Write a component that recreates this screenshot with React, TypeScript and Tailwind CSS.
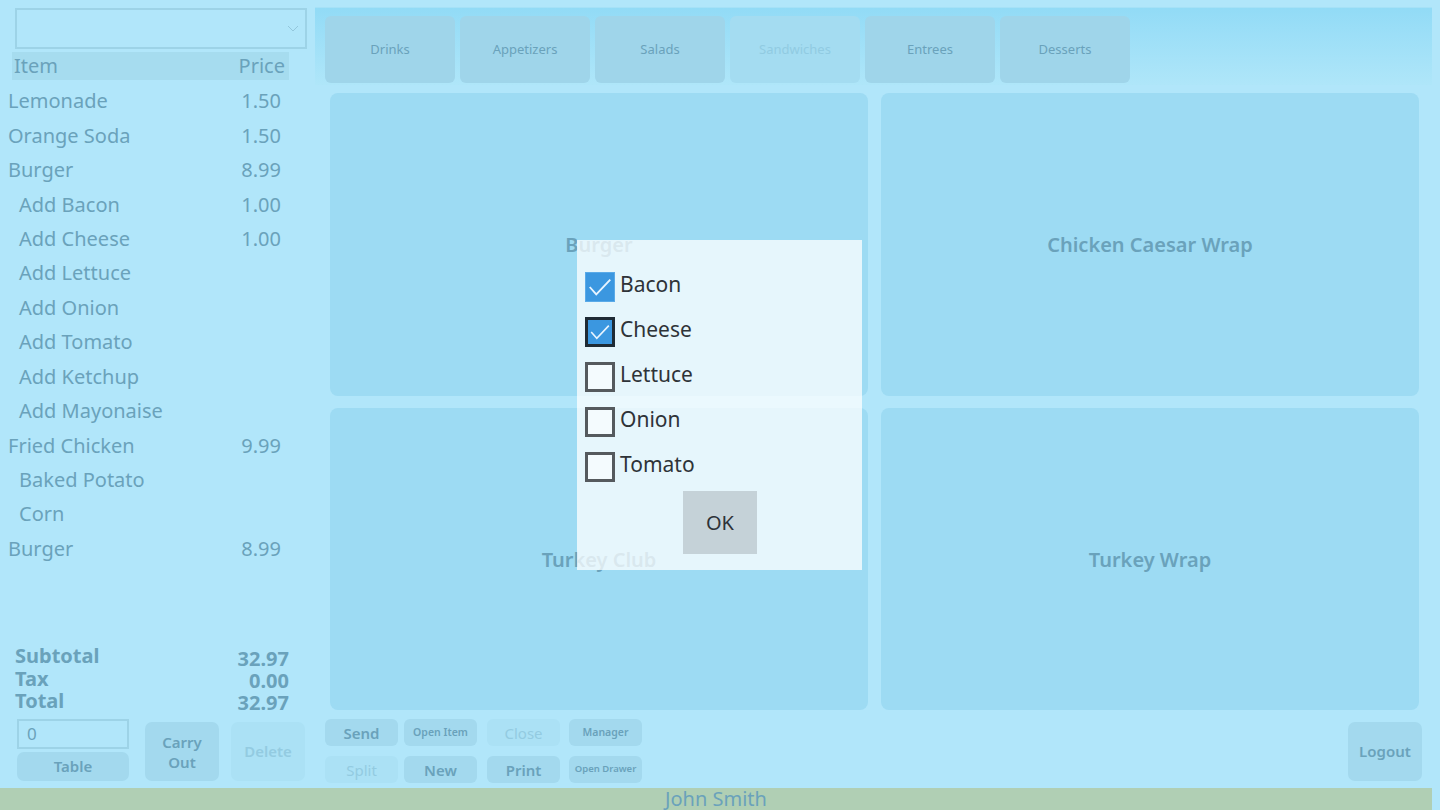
import React from "react";

const items = [
  { name: "Lemonade", price: "1.50", sub: false },
  { name: "Orange Soda", price: "1.50", sub: false },
  { name: "Burger", price: "8.99", sub: false },
  { name: "Add Bacon", price: "1.00", sub: true },
  { name: "Add Cheese", price: "1.00", sub: true },
  { name: "Add Lettuce", price: "", sub: true },
  { name: "Add Onion", price: "", sub: true },
  { name: "Add Tomato", price: "", sub: true },
  { name: "Add Ketchup", price: "", sub: true },
  { name: "Add Mayonaise", price: "", sub: true },
  { name: "Fried Chicken", price: "9.99", sub: false },
  { name: "Baked Potato", price: "", sub: true },
  { name: "Corn", price: "", sub: true },
  { name: "Burger", price: "8.99", sub: false },
];

const categories = [
  { label: "Drinks", disabled: false },
  { label: "Appetizers", disabled: false },
  { label: "Salads", disabled: false },
  { label: "Sandwiches", disabled: true },
  { label: "Entrees", disabled: false },
  { label: "Desserts", disabled: false },
];

const tiles = ["Burger", "Chicken Caesar Wrap", "Turkey Club", "Turkey Wrap"];

const options = [
  { label: "Bacon", checked: true, focused: false },
  { label: "Cheese", checked: true, focused: true },
  { label: "Lettuce", checked: false, focused: false },
  { label: "Onion", checked: false, focused: false },
  { label: "Tomato", checked: false, focused: false },
];

function Check() {
  return (
    <svg viewBox="0 0 30 30" className="w-full h-full">
      <polyline points="4,15 11,23 26,7" fill="none" stroke="#e8f4ff" strokeWidth="2" />
    </svg>
  );
}

function CheckBox({ checked, focused }: { checked: boolean; focused: boolean }) {
  if (checked) {
    return (
      <div
        className={
          "w-[30px] h-[30px] bg-[#3b97e0] " +
          (focused ? "border-[3px] border-[#1f2b35]" : "border border-[#5aaae8]")
        }
      >
        <Check />
      </div>
    );
  }
  return <div className="w-[30px] h-[30px] border-[3px] border-[#555a5e] bg-[#f4fbfe]" />;
}

export default function App() {
  return (
    <div
      className="relative w-[1440px] h-[810px] bg-[#b1e6fa] flex flex-col overflow-hidden text-[#6aa2bb]"
      style={{ fontFamily: '"Noto Sans", "Open Sans", sans-serif' }}
    >
      <div className="flex flex-1 min-h-0">
        {/* order panel */}
        <div className="w-[315px] flex flex-col pt-[8px] pb-[2px]">
          <div className="ml-[15px] w-[292px] h-[41px] border-2 border-[#9dd3e7] flex items-center justify-end pr-[6px]">
            <svg width="12" height="8" viewBox="0 0 12 8">
              <polyline points="1,1 6,6 11,1" fill="none" stroke="#93c7dc" strokeWidth="1" />
            </svg>
          </div>
          <div className="ml-[12px] mt-[3px] w-[277px] h-[28px] bg-[#a6dcef] flex items-center justify-between pl-[2px] pr-[4px] text-[20px] leading-none">
            <span>Item</span>
            <span>Price</span>
          </div>
          <div className="mt-[4px] flex flex-col">
            {items.map((it, i) => (
              <div
                key={i}
                className={
                  "h-[34.45px] flex items-center justify-between w-[281px] text-[20px] leading-none " +
                  (it.sub ? "pl-[19px]" : "pl-[8px]")
                }
              >
                <span>{it.name}</span>
                <span>{it.price}</span>
              </div>
            ))}
          </div>
          <div className="flex-1" />
          <div className="ml-[15px] w-[274px] flex justify-between font-bold text-[20px]">
            <div className="flex flex-col leading-[22.5px]">
              <span>Subtotal</span>
              <span>Tax</span>
              <span>Total</span>
            </div>
            <div className="flex flex-col items-end pt-[3px] leading-[22px]">
              <span>32.97</span>
              <span>0.00</span>
              <span>32.97</span>
            </div>
          </div>
          <div className="mt-[5px] flex items-end">
            <div className="ml-[17px] w-[112px] flex flex-col gap-[3px]">
              <div className="h-[30px] border-2 border-[#9dd3e7] flex items-center pl-[8px] text-[17px]">0</div>
              <div className="h-[29px] rounded-[7px] bg-[#a3d9ee] flex items-center justify-center text-[15px] font-semibold">
                Table
              </div>
            </div>
            <div className="ml-[16px] w-[74px] h-[59px] rounded-[7px] bg-[#a3d9ee] flex items-center justify-center text-center text-[15px] leading-[20px] font-semibold">
              Carry
              <br />
              Out
            </div>
            <div className="ml-[12px] w-[74px] h-[59px] rounded-[7px] bg-[#abe1f5] flex items-center justify-center text-[15px] font-semibold text-[#93cbe1]">
              Delete
            </div>
          </div>
        </div>

        {/* menu panel */}
        <div className="flex-1 flex flex-col pt-[7px] pr-[8px]">
          <div className="h-[78px] bg-gradient-to-b from-[#92dbf6] to-[#afe6f9] flex gap-[5px] pl-[10px] pt-[8px] border-t border-[#a6e1f7]">
            {categories.map((c) => (
              <div
                key={c.label}
                className={
                  "w-[130px] h-[67px] rounded-[6px] flex items-center justify-center text-[13px] " +
                  (c.disabled ? "bg-[#a4dcf1] text-[#91cbe2]" : "bg-[#9fd5ea]")
                }
              >
                {c.label}
              </div>
            ))}
          </div>
          <div className="mt-[8px] ml-[15px] mr-[13px] h-[617px] grid grid-cols-2 grid-rows-2 gap-x-[13px] gap-y-[12px]">
            {tiles.map((t) => (
              <div
                key={t}
                className="rounded-[8px] bg-[#9ddbf3] flex items-center justify-center text-[20px] font-semibold pt-[2px]"
              >
                {t}
              </div>
            ))}
          </div>
          <div className="mt-[9px] flex">
            <div className="ml-[10px] flex flex-col gap-[10px]">
              <div className="flex">
                <div className="w-[73px] h-[27px] rounded-[6px] bg-[#a3d9ee] flex items-center justify-center text-[15px] font-semibold pt-[2px]">
                  Send
                </div>
                <div className="ml-[6px] w-[73px] h-[27px] rounded-[6px] bg-[#a3d9ee] flex items-center justify-center text-[10.5px] font-semibold">
                  Open Item
                </div>
                <div className="ml-[10px] w-[73px] h-[27px] rounded-[6px] bg-[#abe1f5] text-[#93cbe1] flex items-center justify-center text-[15px] pt-[2px]">
                  Close
                </div>
                <div className="ml-[9px] w-[73px] h-[27px] rounded-[6px] bg-[#a3d9ee] flex items-center justify-center text-[10.5px] font-semibold">
                  Manager
                </div>
              </div>
              <div className="flex">
                <div className="w-[73px] h-[27px] rounded-[6px] bg-[#abe1f5] text-[#93cbe1] flex items-center justify-center text-[15px] pt-[2px]">
                  Split
                </div>
                <div className="ml-[6px] w-[73px] h-[27px] rounded-[6px] bg-[#a3d9ee] flex items-center justify-center text-[15px] font-semibold pt-[2px]">
                  New
                </div>
                <div className="ml-[10px] w-[73px] h-[27px] rounded-[6px] bg-[#a3d9ee] flex items-center justify-center text-[15px] font-semibold pt-[2px]">
                  Print
                </div>
                <div className="ml-[9px] w-[73px] h-[27px] rounded-[6px] bg-[#a3d9ee] flex items-center justify-center text-[9.5px] font-semibold">
                  Open Drawer
                </div>
              </div>
            </div>
            <div className="flex-1" />
            <div className="mt-[3px] mr-[10px] w-[74px] h-[59px] rounded-[7px] bg-[#a3d9ee] flex items-center justify-center text-[15px] font-semibold">
              Logout
            </div>
          </div>
        </div>
      </div>

      {/* footer */}
      <div className="mt-[5px] w-[1432px] h-[22px] bg-[#b0cfb4] flex items-center justify-center text-[20px] leading-[22px]">
        John Smith
      </div>

      {/* modifier dialog */}
      <div className="absolute left-[577px] top-[240px] w-[285px] h-[330px] bg-white/75 flex flex-col pl-[8px] pt-[32px]">
        <div className="flex flex-col gap-[15px]">
          {options.map((o) => (
            <div key={o.label} className="flex items-center gap-[5px]">
              <CheckBox checked={o.checked} focused={o.focused} />
              <span className="text-[21px] leading-none text-[#2e3338] -translate-y-[3px]">{o.label}</span>
            </div>
          ))}
        </div>
        <div className="mt-[9px] ml-[98px] w-[74px] h-[63px] bg-[#c5d2d8] flex items-center justify-center text-[20px] text-[#2e3338]">
          OK
        </div>
      </div>
    </div>
  );
}
